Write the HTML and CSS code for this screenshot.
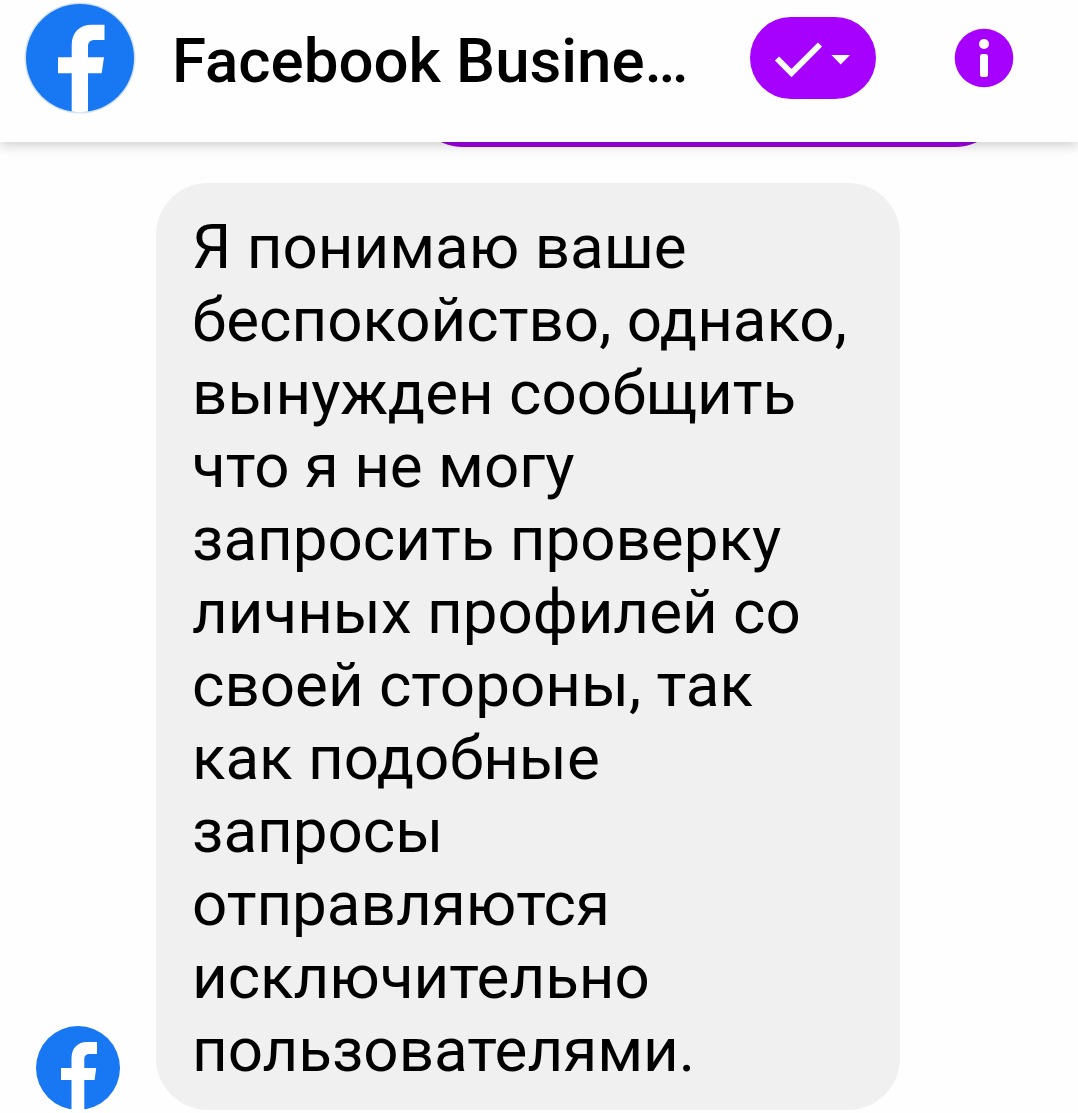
FILE: index.html
```
<!DOCTYPE html>
<html lang="ru">
<head>
    <meta charset="UTF-8">
    <meta name="viewport" content="width=device-width, initial-scale=1.0">
    <title>Facebook Business</title>
    <link rel="stylesheet" href="styles.css">
</head>
<body>
    <header class="header">
        <svg class="header-avatar" viewBox="0 0 110 110">
            <circle cx="55" cy="55" r="55.500" fill="#d3e3f2"/>
            <circle cx="55" cy="55" r="54" fill="#1877f2"/>
            <path fill="#fff" d="M46.700 108.600V70.300H33V54.300H46.700V42C46.700 29 55 21.700 67 21.700H79.500V37H70C65 37 63 39.500 63 43.500V54.300H79L76.700 70.300H63V108.600Q55 110 46.700 108.600Z"/>
        </svg>
        <h1 class="title">Facebook Busine…</h1>
        <button class="status-btn" aria-label="Статус">
            <svg width="126" height="82" viewBox="0 0 126 82">
                <path d="M27 41.500L41.500 56L70 27.500" fill="none" stroke="#fff" stroke-width="6"/>
                <path d="M81.500 38H100L90.700 47.500Z" fill="#fff"/>
            </svg>
        </button>
        <button class="info-btn" aria-label="Информация">
            <svg width="60" height="60" viewBox="0 0 60 60">
                <circle cx="30" cy="30" r="29.300" fill="#a600ff"/>
                <circle cx="30" cy="16" r="5" fill="#fff"/>
                <rect x="26" y="26" width="8" height="23" rx="2.500" fill="#fff"/>
            </svg>
        </button>
    </header>

    <main class="chat">
        <div class="bubble outgoing"></div>
        <div class="message-row">
            <svg class="message-avatar" viewBox="0 0 84 84">
                <circle cx="42" cy="42" r="42" fill="#1877f2"/>
                <path fill="#fff" d="M35.500 84V54H25V42H35.500V32C35.500 22 42 16 51 16H61V28H54C50 28 48.300 30 48.300 33V42H60.200L58.600 54H48.300V84Z"/>
            </svg>
            <div class="bubble incoming">
                Я понимаю ваше<br>
                беспокойство, однако,<br>
                вынужден сообщить<br>
                что я не могу<br>
                запросить проверку<br>
                личных профилей со<br>
                своей стороны, так<br>
                как подобные<br>
                запросы<br>
                отправляются<br>
                исключительно<br>
                пользователями.
            </div>
        </div>
    </main>
</body>
</html>
```
FILE: styles.css
```
* {
    box-sizing: border-box;
}
body {
    margin: 0;
    height: 1113px;
    overflow: hidden;
    background-color: #fefefe;
    color: #000;
    font-family: Roboto, sans-serif;
}
.header {
    position: relative;
    z-index: 1;
    display: flex;
    align-items: center;
    height: 142px;
    padding: 0 64px 26px 25px;
    background-color: #fefefe;
    box-shadow: 0 3px 12px rgba(0,0,0,0.2);
}
.header-avatar {
    width: 110px;
    height: 110px;
    flex-shrink: 0;
    overflow: visible;
}
.title {
    width: 578px;
    margin: 7px 0 0 37px;
    font-size: 61.8px;
    font-weight: 500;
    line-height: 73px;
    white-space: nowrap;
}
button {
    display: block;
    flex-shrink: 0;
    padding: 0;
    border: none;
    background: none;
}
button svg {
    display: block;
}
.status-btn {
    width: 126px;
    height: 82px;
    border-radius: 41px;
    background-color: #a600ff;
}
.info-btn {
    margin-left: 78px;
}
.chat {
    display: flex;
    flex-direction: column;
}
.bubble {
    border-radius: 52px;
}
.outgoing {
    width: 596px;
    height: 110px;
    margin: -105px 71px 36px auto;
    background-color: #9c00e4;
}
.message-row {
    display: flex;
    align-items: flex-end;
    gap: 36px;
    padding-left: 36px;
}
.message-avatar {
    width: 84px;
    height: 84px;
    flex-shrink: 0;
}
.incoming {
    width: 744px;
    height: 927px;
    padding: 28px 36px 23px;
    background-color: #f0f0f0;
    font-size: 61.9px;
    line-height: 73px;
    white-space: nowrap;
}
```
